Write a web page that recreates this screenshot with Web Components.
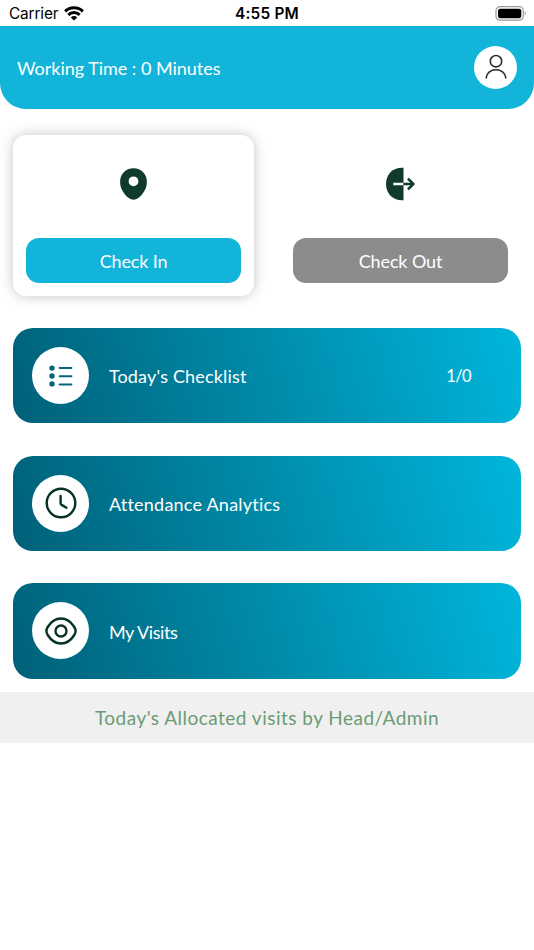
<!DOCTYPE html>
<html lang="en">
<head>
<meta charset="utf-8">
<title>Attendance</title>
<style>
  html, body { margin: 0; background: #fff; }
  body {
    width: 534px;
    height: 950px;
    overflow: hidden;
    font-family: Lato, "Open Sans", sans-serif;
  }
  .actions { display: grid; grid-template-columns: 241px 241px; gap: 26px; padding: 26px 13px 32.3px; }
  .menu { display: grid; gap: 32.35px; padding: 0 13px 13px; }
</style>
</head>
<body>
  <status-bar carrier="Carrier" time="4:55 PM"></status-bar>
  <app-header>Working Time : 0 Minutes</app-header>
  <div class="actions">
    <action-card icon="pin" active style="--track: -0.15px">Check In</action-card>
    <action-card icon="exit" style="--track: -0.12px">Check Out</action-card>
  </div>
  <div class="menu">
    <menu-card icon="list" style="--track: 0.17px">Today's Checklist<span slot="count">1/0</span></menu-card>
    <menu-card icon="clock" style="--track: 0.23px">Attendance Analytics</menu-card>
    <menu-card icon="eye" style="--track: -0.4px">My Visits</menu-card>
  </div>
  <section-banner>Today's Allocated visits by Head/Admin</section-banner>

<script>
const ICONS = {
  user: `<svg width="22" height="26" viewBox="0 0 22 26" fill="none" stroke="#2d2d35" stroke-width="1.6">
    <circle cx="11" cy="7.2" r="5.7"/><path d="M1.3 24.4v-.8a9.7 7.9 0 0 1 19.4 0v.8"/></svg>`,
  pin: `<svg width="27" height="32" viewBox="0 0 27 32">
    <path fill="#0f3a2d" fill-rule="evenodd" d="M13.5.3C5.6.3.1 6.2.1 13.9c0 6.7 4.2 12.8 8.7 16.1 2.9 2.2 6.5 2.2 9.4 0 4.5-3.3 8.7-9.4 8.7-16.1C26.9 6.2 21.4.3 13.5.3Zm0 8.1a4.9 4.9 0 1 1 0 9.8 4.9 4.9 0 0 1 0-9.8Z"/></svg>`,
  exit: `<svg width="29" height="34" viewBox="0 0 29 34" fill="none">
    <path fill="#0f3a2d" d="M17.5.8h-1.5C6.500.8 0 7.500 0 17s6.500 16.200 16 16.200h1.500Z"/>
    <path stroke="#fff" stroke-width="2.5" d="M7.3 17h10.200"/>
    <path stroke="#0f3a2d" stroke-width="2.5" stroke-linejoin="round" d="M17.500 17h9.700M21.900 11.600l5.500 5.400-5.500 5.400"/></svg>`,
  list: `<svg width="24" height="22" viewBox="0 0 24 22" fill="#04657c">
    <circle cx="3" cy="3.1" r="2.7"/><circle cx="3" cy="11" r="2.7"/><circle cx="3" cy="18.9" r="2.7"/>
    <path stroke="#04657c" stroke-width="2" stroke-linecap="round" d="M10.6 2.9h11.8M10.6 11.2h11.8M10.6 19.5h11.8"/></svg>`,
  clock: `<svg width="32" height="32" viewBox="0 0 32 32" fill="none" stroke="#06351f" stroke-width="2.4" stroke-linecap="round" stroke-linejoin="round">
    <circle cx="16" cy="16" r="14.3"/><path d="M15.6 8.9v7.3q0 1.1 1 1.7l4.9 2.8"/></svg>`,
  eye: `<svg width="32" height="32" viewBox="0 0 32 32" fill="none" stroke="#06351f" stroke-width="2.4">
    <path d="M2.7 12C6 6.8 10.6 3.5 16 3.5s10 3.3 13.3 8.5c1.8 2.8 1.8 5.2 0 8C26 25.2 21.4 28.5 16 28.5S6 25.2 2.7 20c-1.8-2.8-1.8-5.2 0-8Z"/>
    <circle cx="16" cy="16" r="5.5"/></svg>`
};

class StatusBar extends HTMLElement {
  connectedCallback() {
    this.attachShadow({ mode: 'open' });
    this.shadowRoot.innerHTML = `
      <style>
        :host {
          display: grid;
          grid-template-columns: 1fr auto 1fr;
          align-items: center;
          box-sizing: border-box;
          height: 26px;
          padding: 1px 7px 0 9px;
          font-family: Inter, sans-serif;
          font-size: 15.4px;
          line-height: 26px;
          color: #000;
        }
        .left { display: flex; align-items: center; gap: 6px; letter-spacing: -0.15px; }
        .left svg { margin-top: -2px; }
        .time { font-weight: 600; letter-spacing: 0.2px; margin-left: -2px; }
        .battery { justify-self: end; margin-top: -2px; }
        svg { display: block; }
      </style>
      <div class="left">
        <span>${this.getAttribute('carrier')}</span>
        <svg width="20" height="15" viewBox="0 0 20 15" fill="none" stroke="#000" stroke-width="2.9">
          <path d="M1.1 5.4a12.6 12.6 0 0 1 17.8 0"/>
          <path d="M4.3 8.9a8.1 8.1 0 0 1 11.4 0"/>
          <path fill="#000" stroke="none" d="M10 14.6 6.8 11.4a4.6 4.6 0 0 1 6.4 0Z"/>
        </svg>
      </div>
      <span class="time">${this.getAttribute('time')}</span>
      <svg class="battery" width="32" height="15" viewBox="0 0 32 15">
        <rect x="1" y=".7" width="27.3" height="13.5" rx="4" fill="none" stroke="#999" stroke-width="1.2"/>
        <rect x="3" y="2.7" width="23.3" height="9.5" rx="2.3"/>
        <path fill="#999" d="M29.8 5.2q2.2 2.2 0 4.4Z"/>
      </svg>
    `;
  }
}

class AppHeader extends HTMLElement {
  connectedCallback() {
    this.attachShadow({ mode: 'open' });
    this.shadowRoot.innerHTML = `
      <style>
        :host {
          display: flex;
          align-items: center;
          justify-content: space-between;
          box-sizing: border-box;
          height: 82.5px;
          padding: 0 17px;
          border-radius: 0 0 26px 26px;
          background: #13b4da;
          color: #fff;
          font-size: 18px;
          letter-spacing: -0.02px;
        }
        .title { padding-top: 2px; }
        .avatar {
          display: grid;
          place-items: center;
          width: 43px;
          height: 43px;
          border-radius: 50%;
          background: #fff;
        }
        svg { display: block; }
      </style>
      <span class="title"><slot></slot></span>
      <div class="avatar">${ICONS.user}</div>
    `;
  }
}

class ActionCard extends HTMLElement {
  connectedCallback() {
    this.attachShadow({ mode: 'open' });
    this.shadowRoot.innerHTML = `
      <style>
        :host {
          display: flex;
          flex-direction: column;
          box-sizing: border-box;
          height: 161.2px;
          padding: 0 13px 13px;
          border-radius: 13px;
          background: #fff;
        }
        :host([active]) { box-shadow: 0 0 13px rgba(0, 0, 0, 0.24); }
        .icon { flex: 1; display: grid; place-items: center; padding-bottom: 4px; }
        .button {
          height: 45.2px;
          border-radius: 13px;
          background: #8c8c8c;
          color: #fff;
          font-size: 18px;
          line-height: 46px;
          letter-spacing: var(--track, 0);
          text-align: center;
        }
        :host([active]) .button { background: #13b4da; }
        svg { display: block; }
      </style>
      <div class="icon">${ICONS[this.getAttribute('icon')]}</div>
      <div class="button"><slot></slot></div>
    `;
  }
}

class MenuCard extends HTMLElement {
  connectedCallback() {
    this.attachShadow({ mode: 'open' });
    this.shadowRoot.innerHTML = `
      <style>
        :host {
          display: flex;
          align-items: center;
          box-sizing: border-box;
          height: 95.3px;
          padding: 0 50px 0 19.4px;
          border-radius: 20px;
          background: linear-gradient(74deg, #006078, #00b6dc);
          color: #fff;
          font-size: 18px;
        }
        .icon {
          display: grid;
          place-items: center;
          width: 57px;
          height: 57px;
          border-radius: 50%;
          background: #fff;
        }
        .label { flex: 1; margin-left: 19.5px; padding-top: 1.4px; letter-spacing: var(--track, 0); }
        .count { font-size: 16.5px; padding-top: 1px; letter-spacing: -0.6px; }
        svg { display: block; }
      </style>
      <div class="icon">${ICONS[this.getAttribute('icon')]}</div>
      <div class="label"><slot></slot></div>
      <div class="count"><slot name="count"></slot></div>
    `;
  }
}

class SectionBanner extends HTMLElement {
  connectedCallback() {
    this.attachShadow({ mode: 'open' });
    this.shadowRoot.innerHTML = `
      <style>
        :host {
          display: block;
          height: 51.4px;
          background: #f0f0f0;
          color: #6b9b74;
          font-size: 19px;
          line-height: 52px;
          letter-spacing: 0.48px;
          text-align: center;
        }
      </style>
      <slot></slot>
    `;
  }
}

customElements.define('status-bar', StatusBar);
customElements.define('app-header', AppHeader);
customElements.define('action-card', ActionCard);
customElements.define('menu-card', MenuCard);
customElements.define('section-banner', SectionBanner);
</script>
</body>
</html>
